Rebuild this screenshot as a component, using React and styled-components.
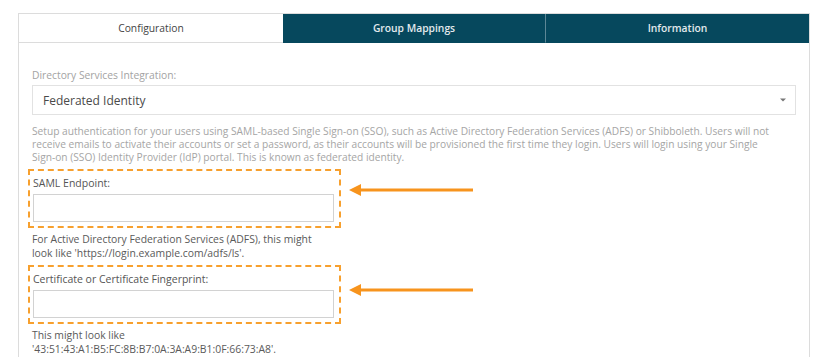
import React from "react";
import styled, { createGlobalStyle } from "styled-components";

const Global = createGlobalStyle`
  body {
    margin: 0;
    background: #fff;
    font-family: "Open Sans", "Liberation Sans", sans-serif;
  }
`;

const Page = styled.div`
  padding: 13px 6px 0 18px;
`;

const Panel = styled.div`
  border: 1px solid #dcdcdc;
  border-bottom: none;
  height: 400px;
`;

const Tabs = styled.div`
  display: grid;
  grid-template-columns: 264px 262px 1fr;
  height: 29px;
`;

const Tab = styled.div`
  display: flex;
  align-items: center;
  justify-content: center;
  font-size: 10.3px;
  background: ${(p) => (p.active ? "#fff" : "#06485d")};
  color: ${(p) => (p.active ? "#444" : "#e3eaed")};
  font-weight: ${(p) => (p.active ? 400 : 600)};
  border-bottom: 1px solid ${(p) => (p.active ? "#dcdcdc" : "#06485d")};
  border-left: ${(p) => (p.divider ? "1px solid #5d8796" : "none")};
`;

const Body = styled.div`
  padding: 26px 13px 0 13px;
`;

const TopLabel = styled.div`
  font-size: 10.3px;
  line-height: 13px;
  color: #a3a3a3;
`;

const Select = styled.div`
  margin-top: 3px;
  height: 28px;
  border: 1px solid #e2e2e2;
  display: flex;
  align-items: center;
  justify-content: space-between;
  padding: 0 8px 0 10px;
  font-size: 12px;
  color: #4a4a4a;
  font-weight: 500;
`;

const Intro = styled.p`
  margin: 10px 0 5px;
  font-size: 10.2px;
  line-height: 13px;
  color: #a5a5a5;
  white-space: nowrap;
`;

const FieldRow = styled.div`
  display: flex;
  align-items: flex-start;
  margin-left: -4px;
`;

const Dashed = styled.div`
  width: 301px;
  border: 2px dashed #f7a02e;
  padding: 5px 5px 4px 3px;
`;

const FieldLabel = styled.div`
  font-size: 10.5px;
  line-height: 14px;
  color: #555;
  margin-bottom: 4px;
`;

const Input = styled.div`
  height: 26px;
  border: 1px solid #d2d2d2;
  background: #fff;
`;

const Arrow = styled.svg`
  margin-left: 8px;
  margin-top: ${(p) => p.top}px;
  flex: none;
`;

const Help = styled.div`
  margin: 5px 0 5px;
  font-size: 10.4px;
  line-height: 13.5px;
  color: #5a5a5a;
`;

function PointArrow({ top }) {
  return (
    <Arrow top={top} width="125" height="14" viewBox="0 0 125 14">
      <line x1="10" y1="7" x2="124" y2="7" stroke="#f7941d" strokeWidth="3" />
      <polygon points="0,7 12,1 12,13" fill="#f7941d" />
    </Arrow>
  );
}

function Field({ label, arrowTop }) {
  return (
    <FieldRow>
      <Dashed>
        <FieldLabel>{label}</FieldLabel>
        <Input />
      </Dashed>
      <PointArrow top={arrowTop} />
    </FieldRow>
  );
}

export default function App() {
  return (
    <Page>
      <Global />
      <Panel>
        <Tabs>
          <Tab active>Configuration</Tab>
          <Tab>Group Mappings</Tab>
          <Tab divider>Information</Tab>
        </Tabs>
        <Body>
          <TopLabel>Directory Services Integration:</TopLabel>
          <Select>
            <span>Federated Identity</span>
            <svg width="8" height="6" viewBox="0 0 8 6">
              <path d="M1 1.5 L4 4.5 L7 1.5 Z" fill="#777" />
            </svg>
          </Select>
          <Intro>
            Setup authentication for your users using SAML-based Single Sign-on (SSO), such as Active Directory Federation Services (ADFS) or Shibboleth. Users will not
            <br />
            receive emails to activate their accounts or set a password, as their accounts will be provisioned the first time they login. Users will login using your Single
            <br />
            Sign-on (SSO) Identity Provider (IdP) portal. This is known as federated identity.
          </Intro>
          <Field label="SAML Endpoint:" arrowTop={14} />
          <Help>
            For Active Directory Federation Services (ADFS), this might
            <br />
            look like 'https://login.example.com/adfs/ls'.
          </Help>
          <Field label="Certificate or Certificate Fingerprint:" arrowTop={18} />
          <Help>
            This might look like
            <br />
            '43:51:43:A1:B5:FC:8B:B7:0A:3A:A9:B1:0F:66:73:A8'.
          </Help>
        </Body>
      </Panel>
    </Page>
  );
}
